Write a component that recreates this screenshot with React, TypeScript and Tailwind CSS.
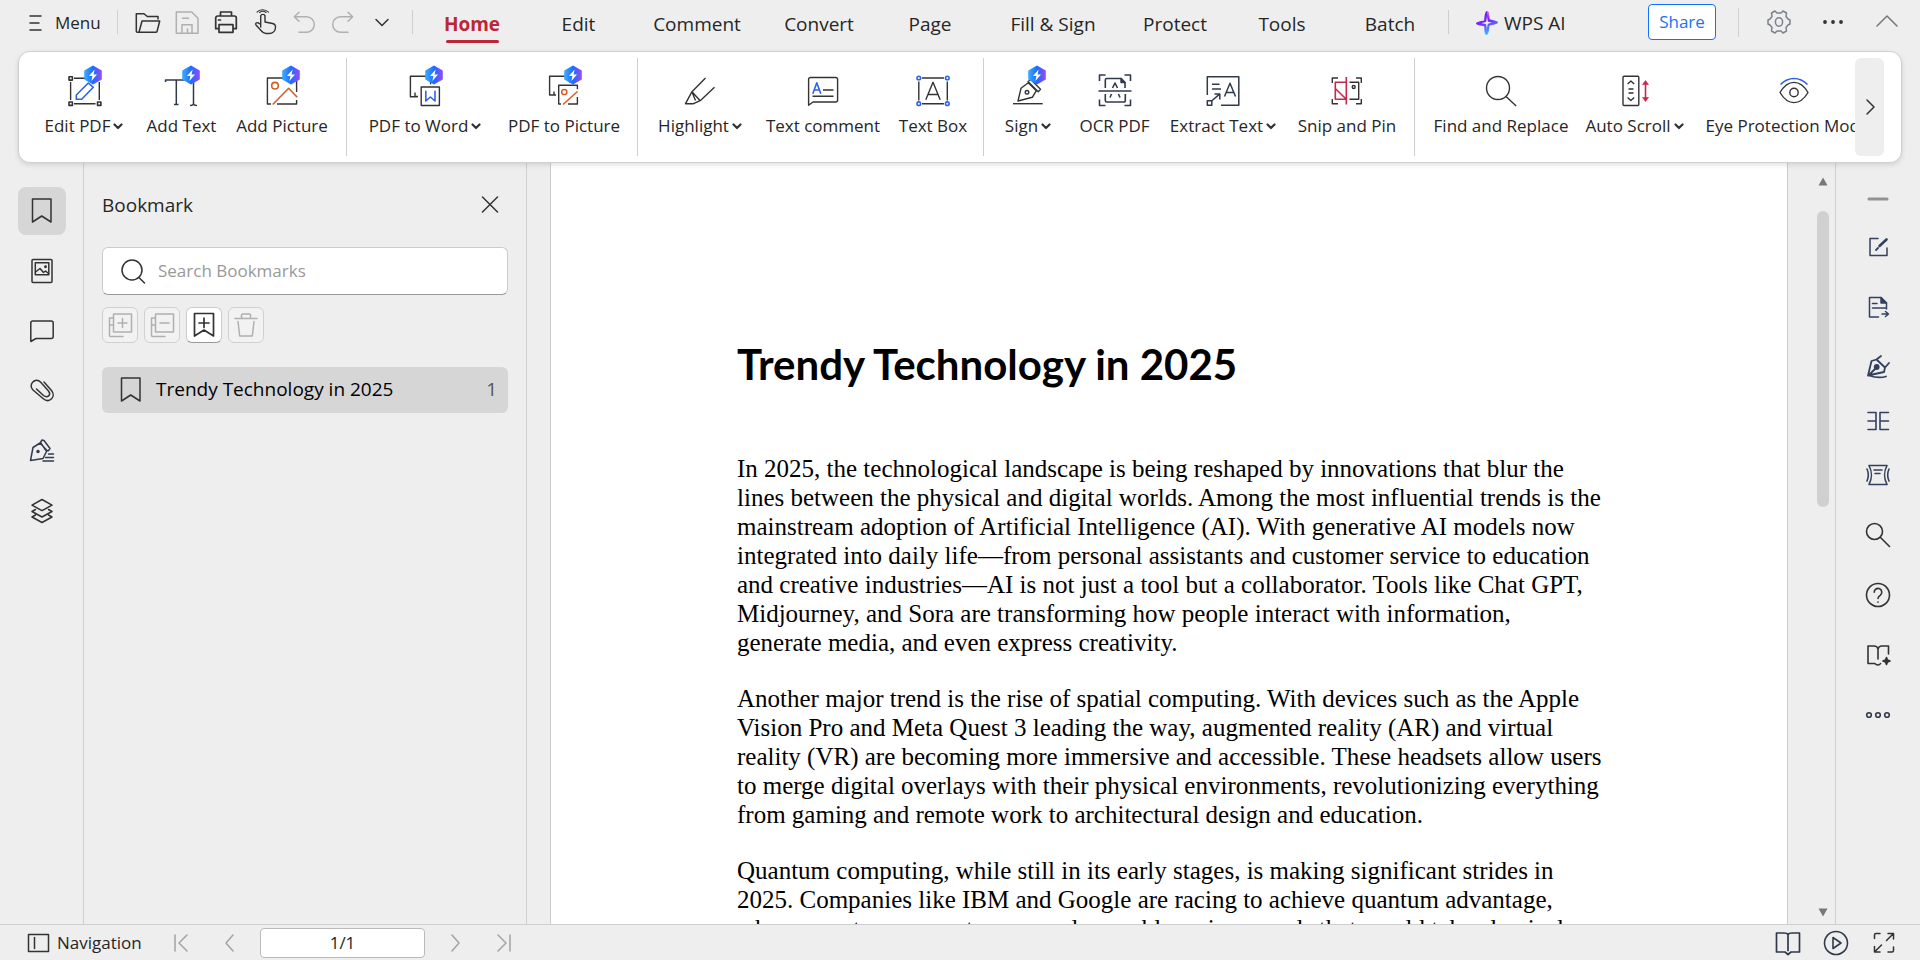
import React, { useState } from "react";

type IconProps = { size?: number; color?: string; width?: number; children: React.ReactNode };

function Icon({ size = 28, color = "#333333", width = 1.5, children }: IconProps) {
  return (
    <svg
      width={size}
      height={size}
      viewBox={`0 0 ${size} ${size}`}
      fill="none"
      stroke={color}
      strokeWidth={width}
      strokeLinecap="round"
      strokeLinejoin="round"
      aria-hidden="true"
      className="shrink-0"
    >
      {children}
    </svg>
  );
}

function RibbonIcon({ children, badge }: { children: React.ReactNode; badge?: boolean }) {
  return (
    <svg width="40" height="44" viewBox="0 0 40 44" fill="none" stroke="#333333" strokeWidth="1.4" strokeLinejoin="round" aria-hidden="true">
      {children}
      {badge && (
        <g stroke="none">
          <path d="M29 2.6 36.8 7v8L29 19.4 21.2 15V7z" fill="url(#badge)" stroke="url(#badge)" strokeWidth="2" />
          <path d="M30.6 5.4 25 12h3.4l-1 5L33 10.4h-3.4z" fill="#fff" />
        </g>
      )}
    </svg>
  );
}

const BLUE = "#2f62e6";
const ORANGE = "#d1602a";
const RED = "#c9284e";
const NAVY = "#313a4d";

type Tool = { label: string; w: string; menu?: boolean; icon: React.ReactNode };

const groups: { gap: string; tools: Tool[] }[] = [
  {
    gap: "ml-[10px] mr-[8px]",
    tools: [
      {
        label: "Edit PDF", w: "w-[102px]", menu: true,
        icon: (
          <RibbonIcon badge>
            <path d="M10 14.3h21.500M6.600 18v18M10 39.700h21.500M35.300 18v18" />
            <g strokeWidth="1.600">
              <rect x="5" y="12.700" width="3.400" height="3.400" /><rect x="5" y="38" width="3.400" height="3.400" /><rect x="33.500" y="38" width="3.400" height="3.400" />
            </g>
            <path d="M12.300 35.300V31l12-12 5 4.300-11.600 12z" stroke={BLUE} strokeWidth="1.600" />
          </RibbonIcon>
        ),
      },
      {
        label: "Add Text", w: "w-[93px]",
        icon: (
          <RibbonIcon badge>
            <path d="M3.500 18v-2h28v24M14.300 16v24M12 40.500h4.500M28 41.500c2 0 3.500-.5 3.500-2 0 1.500 1.500 2 3.500 2" stroke={NAVY} strokeWidth="1.500" />
          </RibbonIcon>
        ),
      },
      {
        label: "Add Picture", w: "w-[108px]",
        icon: (
          <RibbonIcon badge>
            <path d="M9 40H5.400V14h29.200v14M34.600 36v4H15" />
            <circle cx="13" cy="21.700" r="3.300" stroke={ORANGE} strokeWidth="1.600" />
            <path d="M10.700 40.500 26.700 24.300l8.500 9" stroke={ORANGE} strokeWidth="1.600" />
          </RibbonIcon>
        ),
      },
    ],
  },
  {
    gap: "ml-[4px] mr-[7px]",
    tools: [
      {
        label: "PDF to Word", w: "w-[140px]", menu: true,
        icon: (
          <RibbonIcon badge>
            <path d="M12.500 32.700H5.400V12.300h20.200v8M10 28.500v4h3" />
            <rect x="16.200" y="23" width="18.200" height="18.500" />
            <path d="M20.800 26.700v10.300l4.600-4 4.600 4V26.700" stroke={BLUE} strokeWidth="1.600" />
          </RibbonIcon>
        ),
      },
      {
        label: "PDF to Picture", w: "w-[138px]",
        icon: (
          <RibbonIcon badge>
            <path d="M11.500 31H5.600V12.300h20.200v6.500M10 27.500v3.500h2" />
            <path d="M17 40h-2.300V21.300h18.700v4M33.400 33v7H24" />
            <circle cx="20.300" cy="28" r="2.600" stroke={ORANGE} strokeWidth="1.500" />
            <path d="m19 40.500 14.500-13" stroke={ORANGE} strokeWidth="1.600" />
          </RibbonIcon>
        ),
      },
    ],
  },
  {
    gap: "ml-[8px] mr-[8px]",
    tools: [
      {
        label: "Highlight", w: "w-[110px]", menu: true,
        icon: (
          <RibbonIcon>
            <path d="M25.500 14 12 27.700 5.500 39.700h8l6.700-3L34.500 23.300M12 27.700l8.200 9M12 28l3.500 8.500" />
          </RibbonIcon>
        ),
      },
      {
        label: "Text comment", w: "w-[136px]",
        icon: (
          <RibbonIcon>
            <path d="M5.600 41.200V15.500a2 2 0 0 1 2-2h25a2 2 0 0 1 2 2v20.500a2 2 0 0 1-2 2H10z" />
            <path d="M20 26h10.500M9.500 32.300h21" />
            <path d="m9.800 29.700 4-11 4 11M11.300 26h5" stroke={BLUE} strokeWidth="1.600" />
          </RibbonIcon>
        ),
      },
      {
        label: "Text Box", w: "w-[84px]",
        icon: (
          <RibbonIcon>
            <path d="M9 14h22M9 39.700h22M5.800 17.500v19M34.300 17.500v19M12.800 35.700 20 18.300l7.200 17.400M15 30.500h10" />
            <g stroke={BLUE} strokeWidth="1.600">
              <circle cx="5.800" cy="14" r="1.800" /><circle cx="34.300" cy="14" r="1.800" /><circle cx="5.800" cy="39.700" r="1.800" /><circle cx="34.300" cy="39.700" r="1.800" />
            </g>
          </RibbonIcon>
        ),
      },
    ],
  },
  {
    gap: "ml-[1px] mr-[11px]",
    tools: [
      {
        label: "Sign", w: "w-[72px]", menu: true,
        icon: (
          <RibbonIcon badge>
            <path d="M10 37 13 24.300l7.300-5.600 8 8-4 6.600zM20 17.500l3-1.800 9.500 9.500-2.300 2.600z" />
            <circle cx="19" cy="28.300" r="1.800" />
            <path d="M5 39.700h29.700" />
          </RibbonIcon>
        ),
      },
      {
        label: "OCR PDF", w: "w-[101px]",
        icon: (
          <RibbonIcon>
            <g stroke={NAVY} strokeWidth="1.600">
              <path d="M4.500 17v-6h6M29.500 11h6v6M4.500 35.500v6h6M29.500 41.500h6v-6M3.500 27h33" />
              <path d="M10.300 24v-8a1.500 1.500 0 0 1 1.500-1.500H26l4 4V24M10.300 30v6.500a1.500 1.500 0 0 0 1.500 1.500h17a1.500 1.500 0 0 0 1.500-1.500V30" />
              <path d="m17.500 24 2.500-5 2.500 5M16.500 30l-1.500 3.500M23.500 30l1.500 3.500" />
            </g>
            <path d="M26 14.500v4h4z" fill={NAVY} stroke={NAVY} />
          </RibbonIcon>
        ),
      },
      {
        label: "Extract Text", w: "w-[116px]", menu: true,
        icon: (
          <RibbonIcon>
            <g stroke={NAVY} strokeWidth="1.500">
              <path d="M4.300 31V12.700h31.500v28.600H18M9 20.300h7.500M9 25h9M21.500 32.500l5.500-13.300 5.500 13.300M23.300 28.500h7.400" />
              <rect x="4.300" y="36.700" width="4.500" height="4.500" />
              <path d="m8.800 36.700 7.500-6.300M11.500 30h5.300v5.500" />
            </g>
          </RibbonIcon>
        ),
      },
      {
        label: "Snip and Pin", w: "w-[132px]",
        icon: (
          <RibbonIcon>
            <path d="M5.300 19v-5H11M29 14h5.300v5M5.300 35v4.700H11M29 39.700h5.300V35M22.500 18.300h9.200v17h-9.200" />
            <circle cx="26.700" cy="23" r="1.500" />
            <g stroke={RED} strokeWidth="1.600"><path d="M19.300 18.300h-11v17h11M19.300 13v27.500M8.300 24.500l11 10.800" /></g>
          </RibbonIcon>
        ),
      },
    ],
  },
  {
    gap: "",
    tools: [
      {
        label: "Find and Replace", w: "w-[150px]",
        icon: <RibbonIcon><circle cx="17" cy="24" r="11.500" /><path d="m25 32.500 10.200 9.500" /></RibbonIcon>,
      },
      {
        label: "Auto Scroll", w: "w-[117px]", menu: true,
        icon: (
          <RibbonIcon>
            <rect x="8" y="12.300" width="15.800" height="29.200" rx="1" />
            <path d="m12.600 20 3.300-3 3.300 3M12.600 33.500l3.300 3 3.300-3M13.500 25h5M13.500 29h5" />
            <path d="M30.500 19v16" stroke={RED} strokeWidth="1.600" />
            <path d="m30.500 16.500 3 4h-6zM30.500 37.500l3-4h-6z" fill={RED} stroke={RED} strokeWidth=".6" />
          </RibbonIcon>
        ),
      },
      {
        label: "Eye Protection Mode", w: "w-[202px]", menu: true,
        icon: (
          <RibbonIcon>
            <path d="M6 28.500C14 15 26 15 34 28.500 26 42 14 42 6 28.500z" /><circle cx="20" cy="28.500" r="4.200" />
            <path d="M6.500 20.500c8-8 19-8 27 0" stroke={BLUE} strokeWidth="1.600" />
          </RibbonIcon>
        ),
      },
    ],
  },
];

const tabs = [
  ["Home", "w-[106px]"], ["Edit", "w-[107px]"], ["Comment", "w-[130px]"], ["Convert", "w-[114px]"], ["Page", "w-[108px]"],
  ["Fill & Sign", "w-[138px]"], ["Protect", "w-[106px]"], ["Tools", "w-[108px]"], ["Batch", "w-[108px]"],
];

const quick: { label: string; icon: React.ReactNode }[] = [
  { label: "Open", icon: <Icon><path d="M5 23.300H3.300a1 1 0 0 1-1-1V4.700H10l3.300 2.800H24V10M5 23.300 8 12h17.700l-2.600 10.300a1 1 0 0 1-1 1z" /></Icon> },
  { label: "Save", icon: <Icon color="#b0b0b0"><path d="M3.300 3h15.400L25 9.300v15H3.300zM9 24.300v-8.600h10v8.600M9.500 9.300h6M14.500 20v4" /></Icon> },
  { label: "Print", icon: <Icon width={1.7}><path d="M8.500 7V3h11v4M7 19.700H3.700V9a2 2 0 0 1 2-2h16.600a2 2 0 0 1 2 2v10.700H21M7 15.700h14v7.600H7zM6.500 11h2" /></Icon> },
  { label: "Touch mode", icon: <Icon width={1.400}><path d="M9.700 18V7.500a2 2 0 0 1 4.300 0V13l7.500 1.500c2.500.5 3.200 1.500 3 4-.3 4-2.500 6-6.500 6h-3c-2 0-3.500-1-5-3l-5-5.500c-1-1.500.500-3 2.500-2l2.200 1.500" /><path d="M8.500 3.500c2-1.500 4.500-1.500 6.500 0M6 3.200c2.500-3 8-3.500 11.500 0" strokeWidth="1.100" /></Icon> },
  { label: "Undo", icon: <Icon color="#b0b0b0"><path d="M9 3.300 4.300 7.700 9 12.300M4.300 7.700H16.500a7.800 7.800 0 0 1 0 15.600H9" /></Icon> },
  { label: "Redo", icon: <Icon color="#b0b0b0"><path d="m19 3.300 4.700 4.400-4.700 4.600M23.700 7.700H11.500a7.800 7.800 0 0 0 0 15.600H19" /></Icon> },
  { label: "More quick tools", icon: <Icon><path d="m8 10.500 6 6 6-6" /></Icon> },
];

const bookmark = <path d="M4.500 2h18.500v23L13.700 19l-9.200 6z" />;

const leftRail: { label: string; icon: React.ReactNode }[] = [
  { label: "Bookmarks", icon: <Icon>{bookmark}</Icon> },
  { label: "Thumbnails", icon: <Icon><rect x="4" y="2.500" width="20" height="23" rx="1" /><rect x="7.300" y="5.700" width="13.500" height="12" /><path d="m7.500 15 4.500-3.500 3.500 4 2-1.500 3 2.500" /><circle cx="17.500" cy="9.700" r=".7" /></Icon> },
  { label: "Comments", icon: <Icon><path d="M2.800 24.500V6a2 2 0 0 1 2-2h18.400a2 2 0 0 1 2 2v13.500a2 2 0 0 1-2 2H8z" /></Icon> },
  { label: "Attachments", icon: <Icon><path d="m16 5 7.500 8.500c5 6-2 13.500-8.500 8L5 13C-.5 7.500 7.500 0 12.500 5l8 9c3 4-1 7.500-5 4.500l-7-6.500" /></Icon> },
  { label: "Signatures", icon: <Icon color={NAVY}><path d="m2.500 23.500 2.500-13L12 6l7 7.500-4 8zM12.500 5.500 14 3l2 .5 6 8-1.500 2.200H18z" /><circle cx="10" cy="14.500" r="1" fill={NAVY} /><path d="M20.500 17h5M17.500 20.500h8M15 24h10.500" /></Icon> },
  { label: "Layers", icon: <Icon><path d="m14 2.500 10 5.700-10 5.500-10-5.500zM7.500 12.500 4 14.500l10 5.500 10-5.500-3.500-2M7.500 18 4 20l10 5.500L24 20l-3.500-2" /></Icon> },
];

const SLATE = "#34405e";
const rightRail: { label: string; h: string; icon: React.ReactNode }[] = [
  { label: "Collapse sidebar", h: "h-[36px]", icon: <Icon color="#929292" width={3}><path d="M5 14h18" /></Icon> },
  { label: "Edit content", h: "h-[60px]", icon: <Icon color={SLATE}><path d="M14 5.500H6v17h17V15" /><path d="m15.500 13 7-6.500" strokeWidth="2.600" /><path d="m12 17 2-2" strokeWidth="1.800" /></Icon> },
  { label: "Convert file", h: "h-[60px]", icon: <Icon color={SLATE}><path d="M14.500 24H5.500V4.500H17l5.500 5.500v6M8.500 10.500H13M8.500 15h13.500M18 21h6.500M21.500 18.500 24.500 21l-3 2.500" /><path d="M17 4.500V10h5.500z" fill={SLATE} /></Icon> },
  { label: "Sign file", h: "h-[60px]", icon: <Icon color={SLATE} width={1.800}><path d="M4 22.500 7.500 8l5-1.500 8.500 8-1 4.500zM12.500 6.500 17 3M21 14.500l4-4.500M4.500 22.500l8-8M5 22.500c6 2 12 2.500 17 1" /><circle cx="12.700" cy="14" r="2" fill={SLATE} /></Icon> },
  { label: "Compare", h: "h-[48px]", icon: <Icon color={SLATE} width={1.600}><path d="M4 5.500h8v17H4M24.500 5.500H16v17h8.500M4 14h8M16 14h8.500" /></Icon> },
  { label: "Compress", h: "h-[60px]", icon: <Icon color={SLATE} width={1.600}><path d="M5 4.500h18c-3.500 7-3.500 12 0 19H5c3.500-7 3.500-12 0-19zM10 9h8M11 12.500h5M3 8c2 4.500 2 7.500 0 12M25 8c-2 4.500-2 7.500 0 12" /></Icon> },
  { label: "Find", h: "h-[60px]", icon: <Icon width={1.600}><circle cx="10.500" cy="10.500" r="8" /><path d="m16.500 16.500 9 9" /></Icon> },
  { label: "Help", h: "h-[60px]", icon: <Icon width={1.600}><circle cx="14" cy="14" r="11.500" /><path d="M10.200 11.300a3.800 3.800 0 1 1 6 3c-1.500 1-2.200 1.800-2.200 3.200M14 21v.3" /></Icon> },
  { label: "Read with AI", h: "h-[60px]", icon: <Icon width={1.600}><path d="M24.500 13V5h-6.500a4 4 0 0 0-4 3 4 4 0 0 0-4-3H4v17.500h6.500c1 0 1.500 1.500 3.500 1.500 1.500 0 2-.5 2.500-1.500M14 8v10" /><path d="m22.500 16.500 1 2.500 2.500 1-2.500 1-1 2.500-1-2.500-2.500-1 2.500-1z" fill="#333" /></Icon> },
  { label: "More tools", h: "h-[60px]", icon: <Icon color={NAVY} width={1.6}><circle cx="5" cy="14" r="2.300" /><circle cx="14" cy="14" r="2.300" /><circle cx="23" cy="14" r="2.300" /></Icon> },
];

const copy = <path d="M7.500 3h18v18h-18zM7.500 7h-4v17.500a1 1 0 0 0 1 1H17M3.500 14h4" />;
const bookmarkTools: { label: string; on?: boolean; icon: React.ReactNode }[] = [
  { label: "Expand all", icon: <Icon color="#b0b0b0">{copy}<path d="M16.500 7.500v9M12 12h9" /></Icon> },
  { label: "Collapse all", icon: <Icon color="#b0b0b0">{copy}<path d="M12 12h9" /></Icon> },
  { label: "Add bookmark", on: true, icon: <Icon width={1.700}><path d="M4.500 2.500h19V25L14 19l-9.500 6zM14 7v9.500M9 12h10" /></Icon> },
  { label: "Delete bookmark", icon: <Icon color="#b0b0b0"><path d="M3 7.500h22M9.500 7V4a1 1 0 0 1 1-1h7a1 1 0 0 1 1 1v3M6 10.500 7.700 25h12.600L22 10.500" /></Icon> },
];

const paragraphs = [
  [
    "In 2025, the technological landscape is being reshaped by innovations that blur the",
    "lines between the physical and digital worlds. Among the most influential trends is the",
    "mainstream adoption of Artificial Intelligence (AI). With generative AI models now",
    "integrated into daily life—from personal assistants and customer service to education",
    "and creative industries—AI is not just a tool but a collaborator. Tools like Chat GPT,",
    "Midjourney, and Sora are transforming how people interact with information,",
    "generate media, and even express creativity.",
  ],
  [
    "Another major trend is the rise of spatial computing. With devices such as the Apple",
    "Vision Pro and Meta Quest 3 leading the way, augmented reality (AR) and virtual",
    "reality (VR) are becoming more immersive and accessible. These headsets allow users",
    "to merge digital overlays with their physical environments, revolutionizing everything",
    "from gaming and remote work to architectural design and education.",
  ],
  [
    "Quantum computing, while still in its early stages, is making significant strides in",
    "2025. Companies like IBM and Google are racing to achieve quantum advantage,",
    "where quantum computers can solve problems in seconds that would take classical",
  ],
];

function Rule({ className }: { className: string }) {
  return <div className={`w-px shrink-0 bg-[#cfcfcf] ${className}`} />;
}

function PagerButton({ label, d }: { label: string; d: string }) {
  return (
    <button aria-label={label} className="flex h-full w-12 items-center justify-center">
      <Icon size={20} color="#a3a3a3"><path d={d} /></Icon>
    </button>
  );
}

export default function App() {
  const [active, setActive] = useState("Home");
  const [query, setQuery] = useState("");
  return (
    <div className="flex h-screen flex-col overflow-hidden bg-[#eeeeee] font-['Open_Sans','Noto_Sans',sans-serif] text-[#262626]">
      <svg width="0" height="0" className="absolute" aria-hidden="true">
        <defs>
          <linearGradient id="badge" x1="0" y1="0" x2="1" y2="0">
            <stop offset="0" stopColor="#37a8ff" /><stop offset=".5" stopColor="#1f6bff" /><stop offset="1" stopColor="#8a4dff" />
          </linearGradient>
          <linearGradient id="spark" x1="0" y1="0" x2=".3" y2="1">
            <stop offset="0" stopColor="#6a1bff" /><stop offset=".5" stopColor="#7a22ff" /><stop offset="1" stopColor="#38b6ff" />
          </linearGradient>
          <linearGradient id="sparkPink" x1="0" y1="0" x2="0" y2="1">
            <stop offset="0" stopColor="#ff7bd5" /><stop offset="1" stopColor="#7a22ff" />
          </linearGradient>
        </defs>
      </svg>

      <header className="flex h-[51px] shrink-0 items-center">
        <button className="flex h-full w-[117px] shrink-0 items-center gap-2 pl-[25px] pb-[5px] text-[17px]">
          <Icon size={22}><path d="M5 4h11M5 11h9M5 18h11" /></Icon>
          Menu
        </button>
        <Rule className="mb-[7px] h-6" />
        <div className="ml-[10px] flex shrink-0 pb-[6px]">
          {quick.map((q) => (
            <button key={q.label} aria-label={q.label} className="flex w-[39px] justify-center">{q.icon}</button>
          ))}
        </div>
        <Rule className="mb-[7px] ml-[11px] mr-[6px] h-6" />
        <nav className="flex h-full shrink-0">
          {tabs.map(([name, w]) => (
            <button key={name} onClick={() => setActive(name)} className={`flex flex-col items-center pt-3 text-[19px] leading-6 ${w} ${active === name ? "font-bold text-[#bd2636]" : ""}`}>
              {name}
              {active === name && <span className="mt-1 h-[3px] w-[53px] rounded-full bg-[#bd2636]" />}
            </button>
          ))}
        </nav>
        <Rule className="mb-[7px] ml-1 h-6" />
        <button className="ml-[26px] flex shrink-0 items-center gap-[5px] pb-[5px] text-[19px] leading-6">
          <svg width="24" height="26" viewBox="0 0 24 26" aria-hidden="true">
            <path d="M12 1c2 0 2.300 5 2.400 8.200 3.600.8 8.600 1.800 8.600 3.300s-5 2.300-8.600 3.200C14.300 19 13.500 25 11.500 25S9.300 19.500 9.200 16.300C5.500 15.500 1 15 1 13.500s4.500-2.300 8.200-3C9.300 7 10 1 12 1z" fill="url(#spark)" />
            <path d="M12 6c-.5 3-.6 5-.8 5.800-1 .5-3 1-4.700 1.400 2 .4 3.800.6 4.700 1.300.3 1.500.4 3 .6 4.500.5-2 .6-3.700 1-5 1.200-.6 3-1 4.700-1.400-2-.4-3.700-.6-4.600-1.200-.4-1.500-.5-3.400-.9-5.400z" fill="#eeeeee" />
            <path d="M12 1c2 0 2.300 5 2.400 8.200l-1.900-1.500z" fill="url(#sparkPink)" />
          </svg>
          WPS AI
        </button>
        <div className="ml-auto mr-[19px] flex shrink-0 items-center pb-[7px]">
          <button className="h-9 w-[68px] rounded-[4px] border border-[#0f72ff] bg-white text-[17px] text-[#1a73f5]">Share</button>
          <Rule className="ml-[22px] mr-[26px] h-[29px]" />
          <button aria-label="Settings" className="flex w-7 justify-center">
            <Icon color="#7b818c"><path d="m10 3 2 2h4l2-2 3.500 2-.500 3.500 2 2.500 2 1v4l-2 1-2 2.500.500 3.500-3.500 2-2-2h-4l-2 2L6.500 23 7 19.500 5 17l-2-1v-4l2-1 2-2.500L6.500 5z" /><ellipse cx="14" cy="14" rx="3.600" ry="4.200" /></Icon>
          </button>
          <button aria-label="More" className="ml-[26px] flex w-7 justify-center">
            <Icon><g fill="#333" stroke="none"><circle cx="6" cy="14" r="1.900" /><circle cx="14" cy="14" r="1.900" /><circle cx="22" cy="14" r="1.900" /></g></Icon>
          </button>
          <button aria-label="Collapse ribbon" className="ml-[26px] flex w-7 justify-center">
            <Icon color="#777"><path d="m4 18 10-10 10 10" /></Icon>
          </button>
        </div>
      </header>

      <section aria-label="Home tools" className="relative z-10 mx-[18px] flex h-28 shrink-0 rounded-xl border border-[#d0d0d0] bg-white py-[6px] pl-[14px] pr-[17px] shadow-[0_2px_5px_rgba(0,0,0,0.12)]">
        <div className="flex min-w-0 flex-1 overflow-hidden">
          {groups.map((g, i) => (
            <React.Fragment key={i}>
              {g.tools.map((t) => (
                <button key={t.label} className={`flex shrink-0 flex-col items-center whitespace-nowrap pt-[6px] ${t.w}`}>
                  {t.icon}
                  <span className="mt-[6px] flex items-center gap-[3px] text-[17px] leading-6">
                    {t.label}
                    {t.menu && <Icon size={10} width={2.200}><path d="m1.500 3.500 3.500 3.500 3.500-3.500" /></Icon>}
                  </span>
                </button>
              ))}
              {g.gap && <Rule className={`h-full ${g.gap}`} />}
            </React.Fragment>
          ))}
        </div>
        <button aria-label="Scroll tools" className="flex w-[29px] shrink-0 items-center justify-center rounded-md bg-[#eeeeee]">
          <Icon size={20}><path d="m7 3 7 7-7 7" /></Icon>
        </button>
      </section>

      <div className="flex min-h-0 flex-1">
        <nav aria-label="Panels" className="flex w-[84px] shrink-0 flex-col items-center gap-3 border-r border-[#cfcfcf] pt-6">
          {leftRail.map((r, i) => (
            <button key={r.label} aria-label={r.label} className={`flex size-12 items-center justify-center rounded-lg ${i === 0 ? "bg-[#d6d6d6]" : ""}`}>{r.icon}</button>
          ))}
        </nav>

        <aside className="w-[443px] shrink-0 border-r border-[#cfcfcf] pl-[18px] pr-[18px] pt-[26px]">
          <div className="flex h-8 items-center justify-between pr-1">
            <h2 className="text-[19px]">Bookmark</h2>
            <button aria-label="Close panel"><Icon><path d="m6.500 6 15 15M21.500 6l-15 15" /></Icon></button>
          </div>
          <label className="mt-[26px] flex h-12 items-center gap-[10px] rounded-md border border-[#cccccc] border-b-[#999999] bg-white pl-[17px]">
            <Icon><circle cx="12" cy="13" r="10" /><path d="m19 20.500 5.500 5.500" /></Icon>
            <input value={query} onChange={(e) => setQuery(e.target.value)} aria-label="Search Bookmarks" placeholder="Search Bookmarks" className="min-w-0 flex-1 bg-transparent text-[17px] outline-none placeholder:text-[#999999]" />
          </label>
          <div className="mt-3 flex gap-[6px]">
            {bookmarkTools.map((b) => (
              <button key={b.label} aria-label={b.label} className={`flex size-9 items-center justify-center rounded-md border ${b.on ? "border-[#cccccc] border-b-[#999999] bg-white" : "border-[#d0d0d0] bg-[#f2f2f2]"}`}>{b.icon}</button>
            ))}
          </div>
          <button className="mt-6 flex h-[46px] w-full items-center rounded-md bg-[#d6d6d6] pb-px pl-[15px] pr-[11px] text-left text-black">
            <Icon>{bookmark}</Icon>
            <span className="ml-[11px] flex-1 text-[19px]">Trendy Technology in 2025</span>
            <span className="text-[19px] text-[#555555]">1</span>
          </button>
        </aside>

        <main className="flex min-w-0 flex-1 overflow-hidden pl-[23px]">
          <article className="min-w-0 flex-1 overflow-hidden whitespace-nowrap border-x border-[#cccccc] bg-white pl-[186px] pt-[173px] text-black">
            <h1 className="font-['Lato',sans-serif] text-[42px] font-bold leading-[56px]">Trendy Technology in 2025</h1>
            <div className="mt-[62px] flex flex-col gap-[27px] font-['Liberation_Serif',serif] text-[25px] leading-[29px]">
              {paragraphs.map((lines, i) => (
                <p key={i}>{lines.map((l) => <span key={l} className="block">{l}</span>)}</p>
              ))}
            </div>
          </article>
          <div className="flex w-[47px] shrink-0 flex-col items-center pb-[7px] pl-[23px] pt-[14px]">
            <svg width="10" height="9" viewBox="0 0 10 9" aria-hidden="true"><path d="M5 .5 9.500 8.500h-9z" fill="#777" /></svg>
            <div className="mt-[25px] h-[296px] w-3 rounded-full bg-[#d0d0d0]" />
            <svg className="mt-auto" width="10" height="9" viewBox="0 0 10 9" aria-hidden="true"><path d="M5 8.500.500.5h9z" fill="#777" /></svg>
          </div>
        </main>

        <nav aria-label="Side tools" className="flex w-[85px] shrink-0 flex-col items-center border-l border-[#cfcfcf] pt-[18px]">
          {rightRail.map((r) => (
            <button key={r.label} aria-label={r.label} className={`flex w-12 items-center justify-center ${r.h}`}>{r.icon}</button>
          ))}
        </nav>
      </div>

      <footer className="flex h-9 shrink-0 items-center border-t border-[#cfcfcf] pl-[26px] pr-[22px]">
        <button className="flex w-[132px] items-center gap-[7px] text-[17px]">
          <Icon size={24}><rect x="2.500" y="3.500" width="20" height="17" /><path d="M8.500 6.500v11" /></Icon>
          Navigation
        </button>
        <PagerButton label="First page" d="M3 2v16M15 2 7 10l8 8" />
        <PagerButton label="Previous page" d="m13 2-7 8 7 8" />
        <input aria-label="Page number" defaultValue="1/1" className="mx-[6px] h-[30px] w-[165px] rounded-[4px] border border-[#bbbbbb] bg-white text-center text-[17px] outline-none" />
        <PagerButton label="Next page" d="m7 2 7 8-7 8" />
        <PagerButton label="Last page" d="m5 2 8 8-8 8M17 2v16" />
        <div className="ml-auto flex gap-5">
          <button aria-label="Reading view"><Icon color={NAVY} width={1.700}><path d="M14 5v16.500M2.500 4H10c2 0 3.500.5 4 1.500.500-1 2-1.500 4-1.500h7.500v19H17l-3 2.500-3-2.500H2.500z" /></Icon></button>
          <button aria-label="Play slideshow"><Icon color={NAVY} width={1.600}><circle cx="14" cy="14" r="11.500" /><path d="m11 8.500 8 5.500-8 5.500z" /></Icon></button>
          <button aria-label="Full screen"><Icon><path d="M10 4.500H6a1.500 1.500 0 0 0-1.500 1.500v3.500M18 23h4a1.500 1.500 0 0 0 1.500-1.500V18M16.500 11.500l7-7M18 4.500h5.500V10M11.500 16l-7 7M4.500 17.500V23H10" /></Icon></button>
        </div>
      </footer>
    </div>
  );
}
